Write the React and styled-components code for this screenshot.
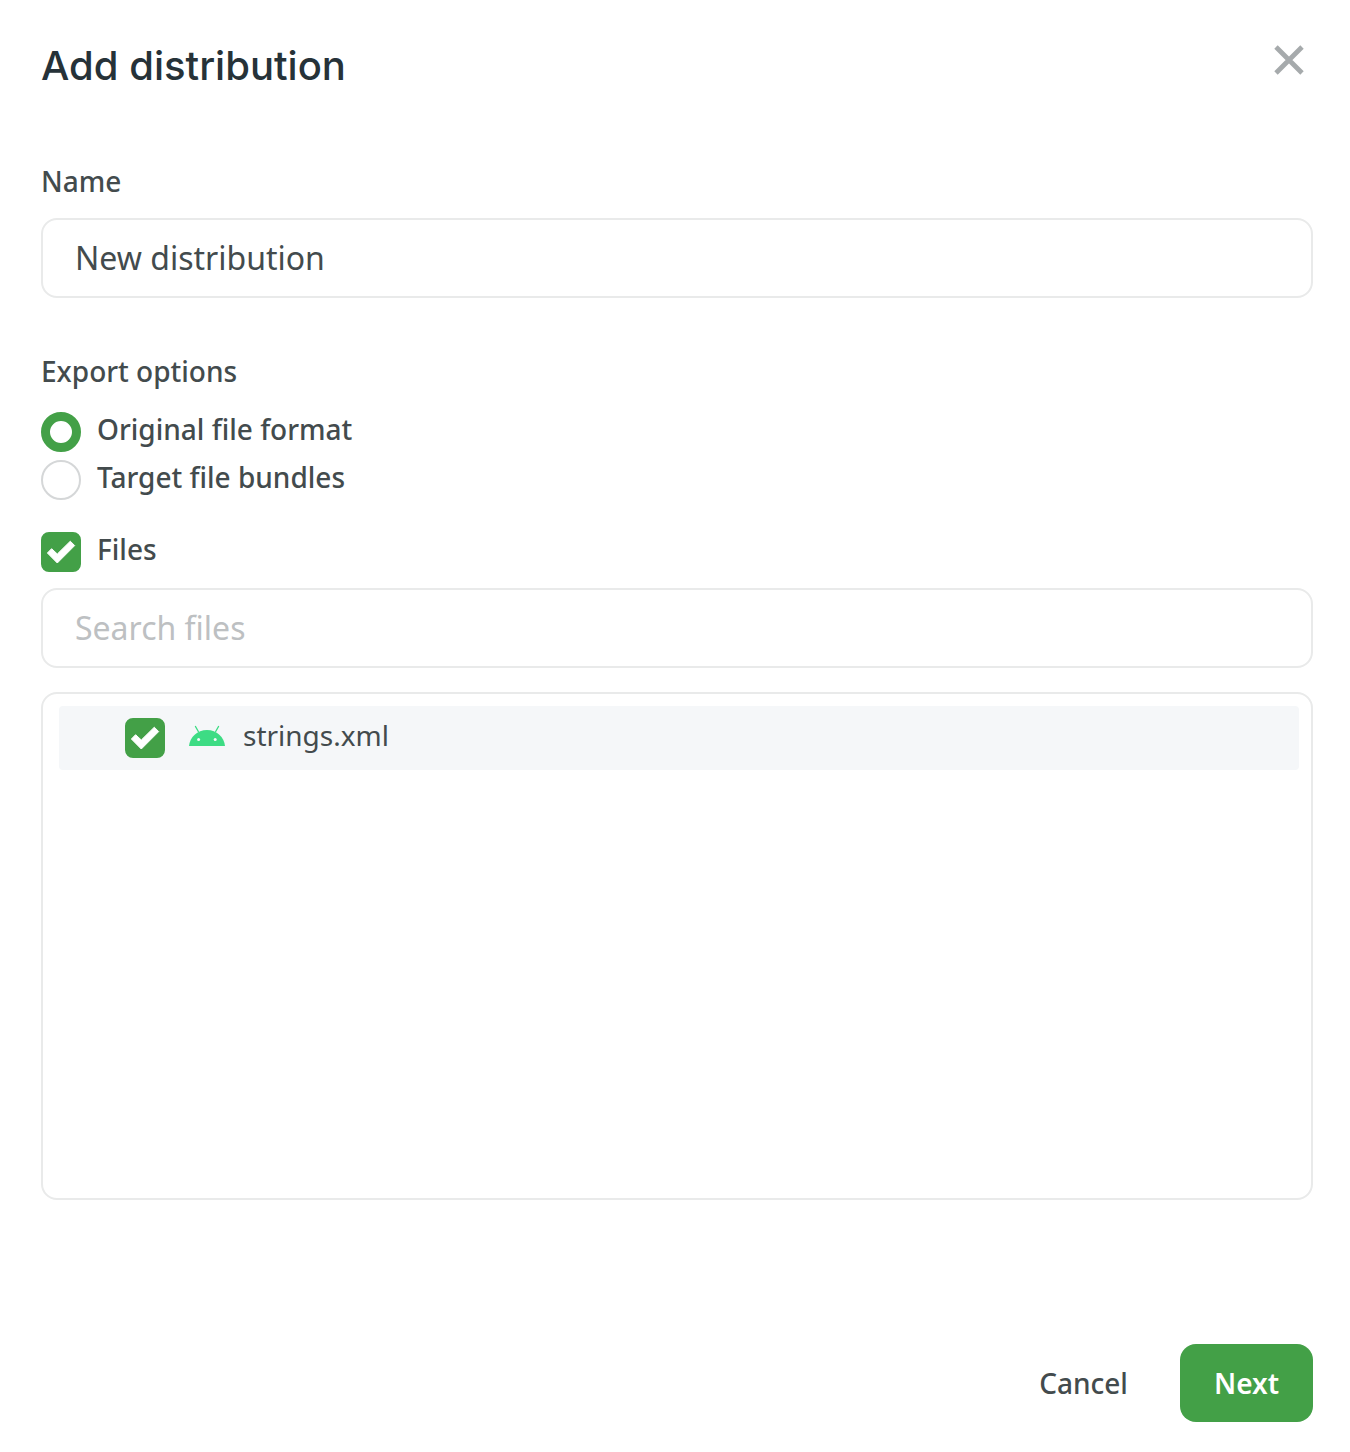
import React, { useState } from "react";
import styled, { createGlobalStyle } from "styled-components";

const files = [{ id: "strings", name: "strings.xml" }];

function CheckBox({ id, checked, onChange }) {
    return (
        <CheckWrap>
            <CheckInput
                type="checkbox"
                id={id}
                checked={checked}
                onChange={onChange}
            />
            {checked && (
                <CheckMark viewBox="0 0 40 40" aria-hidden="true">
                    <path
                        d="M6.4 21 10.6 16.7 16.3 22 29.3 9.2 33.7 13.6 16.3 31Z"
                        fill="#fff"
                        stroke="#fff"
                        strokeWidth="1"
                        strokeLinejoin="round"
                    />
                </CheckMark>
            )}
        </CheckWrap>
    );
}

function AndroidIcon() {
    return (
        <svg width="36" height="22" viewBox="0 -2 36 22" aria-hidden="true">
            <path
                d="M6.4 0.4 9.4 5.6M29.6 0.4 26.6 5.6"
                stroke="#3ddc84"
                strokeWidth="1.2"
                strokeLinecap="round"
            />
            <path d="M0 20C0.9 11 8.2 4 18 4S35.1 11 36 20Z" fill="#3ddc84" />
            <circle cx="9.6" cy="13.6" r="1.5" fill="#f5f7f9" />
            <circle cx="26.2" cy="13.6" r="1.5" fill="#f5f7f9" />
        </svg>
    );
}

function App() {
    const [name, setName] = useState("New distribution");
    const [format, setFormat] = useState("original");
    const [filesOn, setFilesOn] = useState(true);
    const [search, setSearch] = useState("");
    const [selected, setSelected] = useState({ strings: true });

    const toggleFile = (id) => {
        setSelected({ ...selected, [id]: !selected[id] });
    };

    const shown = files.filter((f) => f.name.includes(search));

    return (
        <>
            <GlobalStyle />
            <Dialog onSubmit={(e) => e.preventDefault()}>
                <Header>
                    <Title>Add distribution</Title>
                    <CloseButton type="button" aria-label="Close">
                        <svg width="30" height="30" viewBox="0 0 30 30">
                            <path
                                d="M2 2 28 28M28 2 2 28"
                                stroke="#a6aaac"
                                strokeWidth="4.8"
                            />
                        </svg>
                    </CloseButton>
                </Header>

                <FieldLabel htmlFor="name">Name</FieldLabel>
                <TextInput
                    type="text"
                    id="name"
                    value={name}
                    onChange={(e) => setName(e.target.value)}
                />

                <Options>
                    <Legend>Export options</Legend>
                    <OptionLabel>
                        <Radio
                            type="radio"
                            name="format"
                            checked={format === "original"}
                            onChange={() => setFormat("original")}
                        />
                        Original file format
                    </OptionLabel>
                    <OptionLabel>
                        <Radio
                            type="radio"
                            name="format"
                            checked={format === "bundles"}
                            onChange={() => setFormat("bundles")}
                        />
                        Target file bundles
                    </OptionLabel>
                </Options>

                <FilesLabel htmlFor="files">
                    <CheckBox
                        id="files"
                        checked={filesOn}
                        onChange={() => setFilesOn(!filesOn)}
                    />
                    Files
                </FilesLabel>
                <TextInput
                    type="text"
                    placeholder="Search files"
                    aria-label="Search files"
                    value={search}
                    onChange={(e) => setSearch(e.target.value)}
                />

                <FileList>
                    {shown.map((file) => (
                        <FileRow key={file.id}>
                            <CheckBox
                                id={file.id}
                                checked={selected[file.id]}
                                onChange={() => toggleFile(file.id)}
                            />
                            <FileName htmlFor={file.id}>
                                <AndroidIcon />
                                {file.name}
                            </FileName>
                        </FileRow>
                    ))}
                </FileList>

                <Footer>
                    <Button type="button">Cancel</Button>
                    <Button type="submit" $primary>
                        Next
                    </Button>
                </Footer>
            </Dialog>
        </>
    );
}

export default App;

const GlobalStyle = createGlobalStyle`
    * {
        box-sizing: border-box;
    }
    body {
        margin: 0;
        background: #fff;
        color: #434b4d;
        font-family: "Noto Sans", sans-serif;
        font-size: 28px;
        line-height: 34px;
    }
`;
const Dialog = styled.form`
    display: flex;
    flex-direction: column;
    min-height: 100vh;
    padding: 40px 37px 30px 41px;
`;
const Header = styled.header`
    display: flex;
    justify-content: space-between;
    align-items: flex-start;
    margin-bottom: 72px;
`;
const Title = styled.h1`
    margin: 0;
    color: #263238;
    font-family: Inter, sans-serif;
    font-size: 40px;
    font-weight: 500;
    line-height: 52px;
`;
const CloseButton = styled.button`
    display: flex;
    padding: 5px 9px;
    border: none;
    background: none;
    cursor: pointer;
`;
const FieldLabel = styled.label`
    margin-bottom: 20px;
    font-weight: 500;
`;
const TextInput = styled.input`
    width: 100%;
    height: 80px;
    padding: 0 32px 2px;
    border: 2px solid #e9eaea;
    border-radius: 16px;
    outline: none;
    background: #fff;
    color: #434b4d;
    font-family: inherit;
    font-size: 32px;

    &::placeholder {
        color: #bdc0c2;
        opacity: 1;
    }
`;
const Options = styled.fieldset`
    display: flex;
    flex-direction: column;
    gap: 8px;
    margin: 56px 0 32px;
    padding: 0;
    border: none;
`;
const Legend = styled.legend`
    margin-bottom: 24px;
    padding: 0;
    font-weight: 500;
`;
const OptionLabel = styled.label`
    display: flex;
    align-items: flex-start;
    gap: 16px;
    height: 40px;
    font-weight: 500;
`;
const FilesLabel = styled(OptionLabel)`
    margin-bottom: 16px;
`;
const Radio = styled.input`
    appearance: none;
    flex: none;
    width: 40px;
    height: 40px;
    margin: 0;
    border: 2px solid #d5d7d8;
    border-radius: 50%;
    background: #fff;

    &:checked {
        border: 9px solid #43a047;
    }
`;
const CheckWrap = styled.span`
    display: grid;
    flex: none;
    width: 40px;
    height: 40px;
`;
const CheckInput = styled.input`
    appearance: none;
    grid-area: 1 / 1;
    width: 40px;
    height: 40px;
    margin: 0;
    border: 2px solid #d5d7d8;
    border-radius: 8px;

    &:checked {
        border-color: #43a047;
        background: #43a047;
    }
`;
const CheckMark = styled.svg`
    grid-area: 1 / 1;
    width: 40px;
    height: 40px;
    pointer-events: none;
`;
const FileList = styled.ul`
    flex: 1;
    min-height: 240px;
    margin: 24px 0 0;
    padding: 12px 12px 12px 16px;
    border: 2px solid #e9eaea;
    border-radius: 16px;
    list-style: none;
`;
const FileRow = styled.li`
    display: flex;
    align-items: flex-start;
    gap: 24px;
    padding: 12px 66px;
    border-radius: 4px;
    background: #f5f7f9;
`;
const FileName = styled.label`
    display: flex;
    align-items: center;
    gap: 18px;
`;
const Footer = styled.footer`
    display: flex;
    justify-content: flex-end;
    gap: 18px;
    margin-top: 144px;
`;
const Button = styled.button`
    height: 78px;
    padding: 0 34px;
    border: none;
    border-radius: 16px;
    background: ${(props) => (props.$primary ? "#43a047" : "transparent")};
    color: ${(props) => (props.$primary ? "#fff" : "#434b4d")};
    font-family: inherit;
    font-size: 28px;
    font-weight: ${(props) => (props.$primary ? 600 : 500)};
    cursor: pointer;
`;
